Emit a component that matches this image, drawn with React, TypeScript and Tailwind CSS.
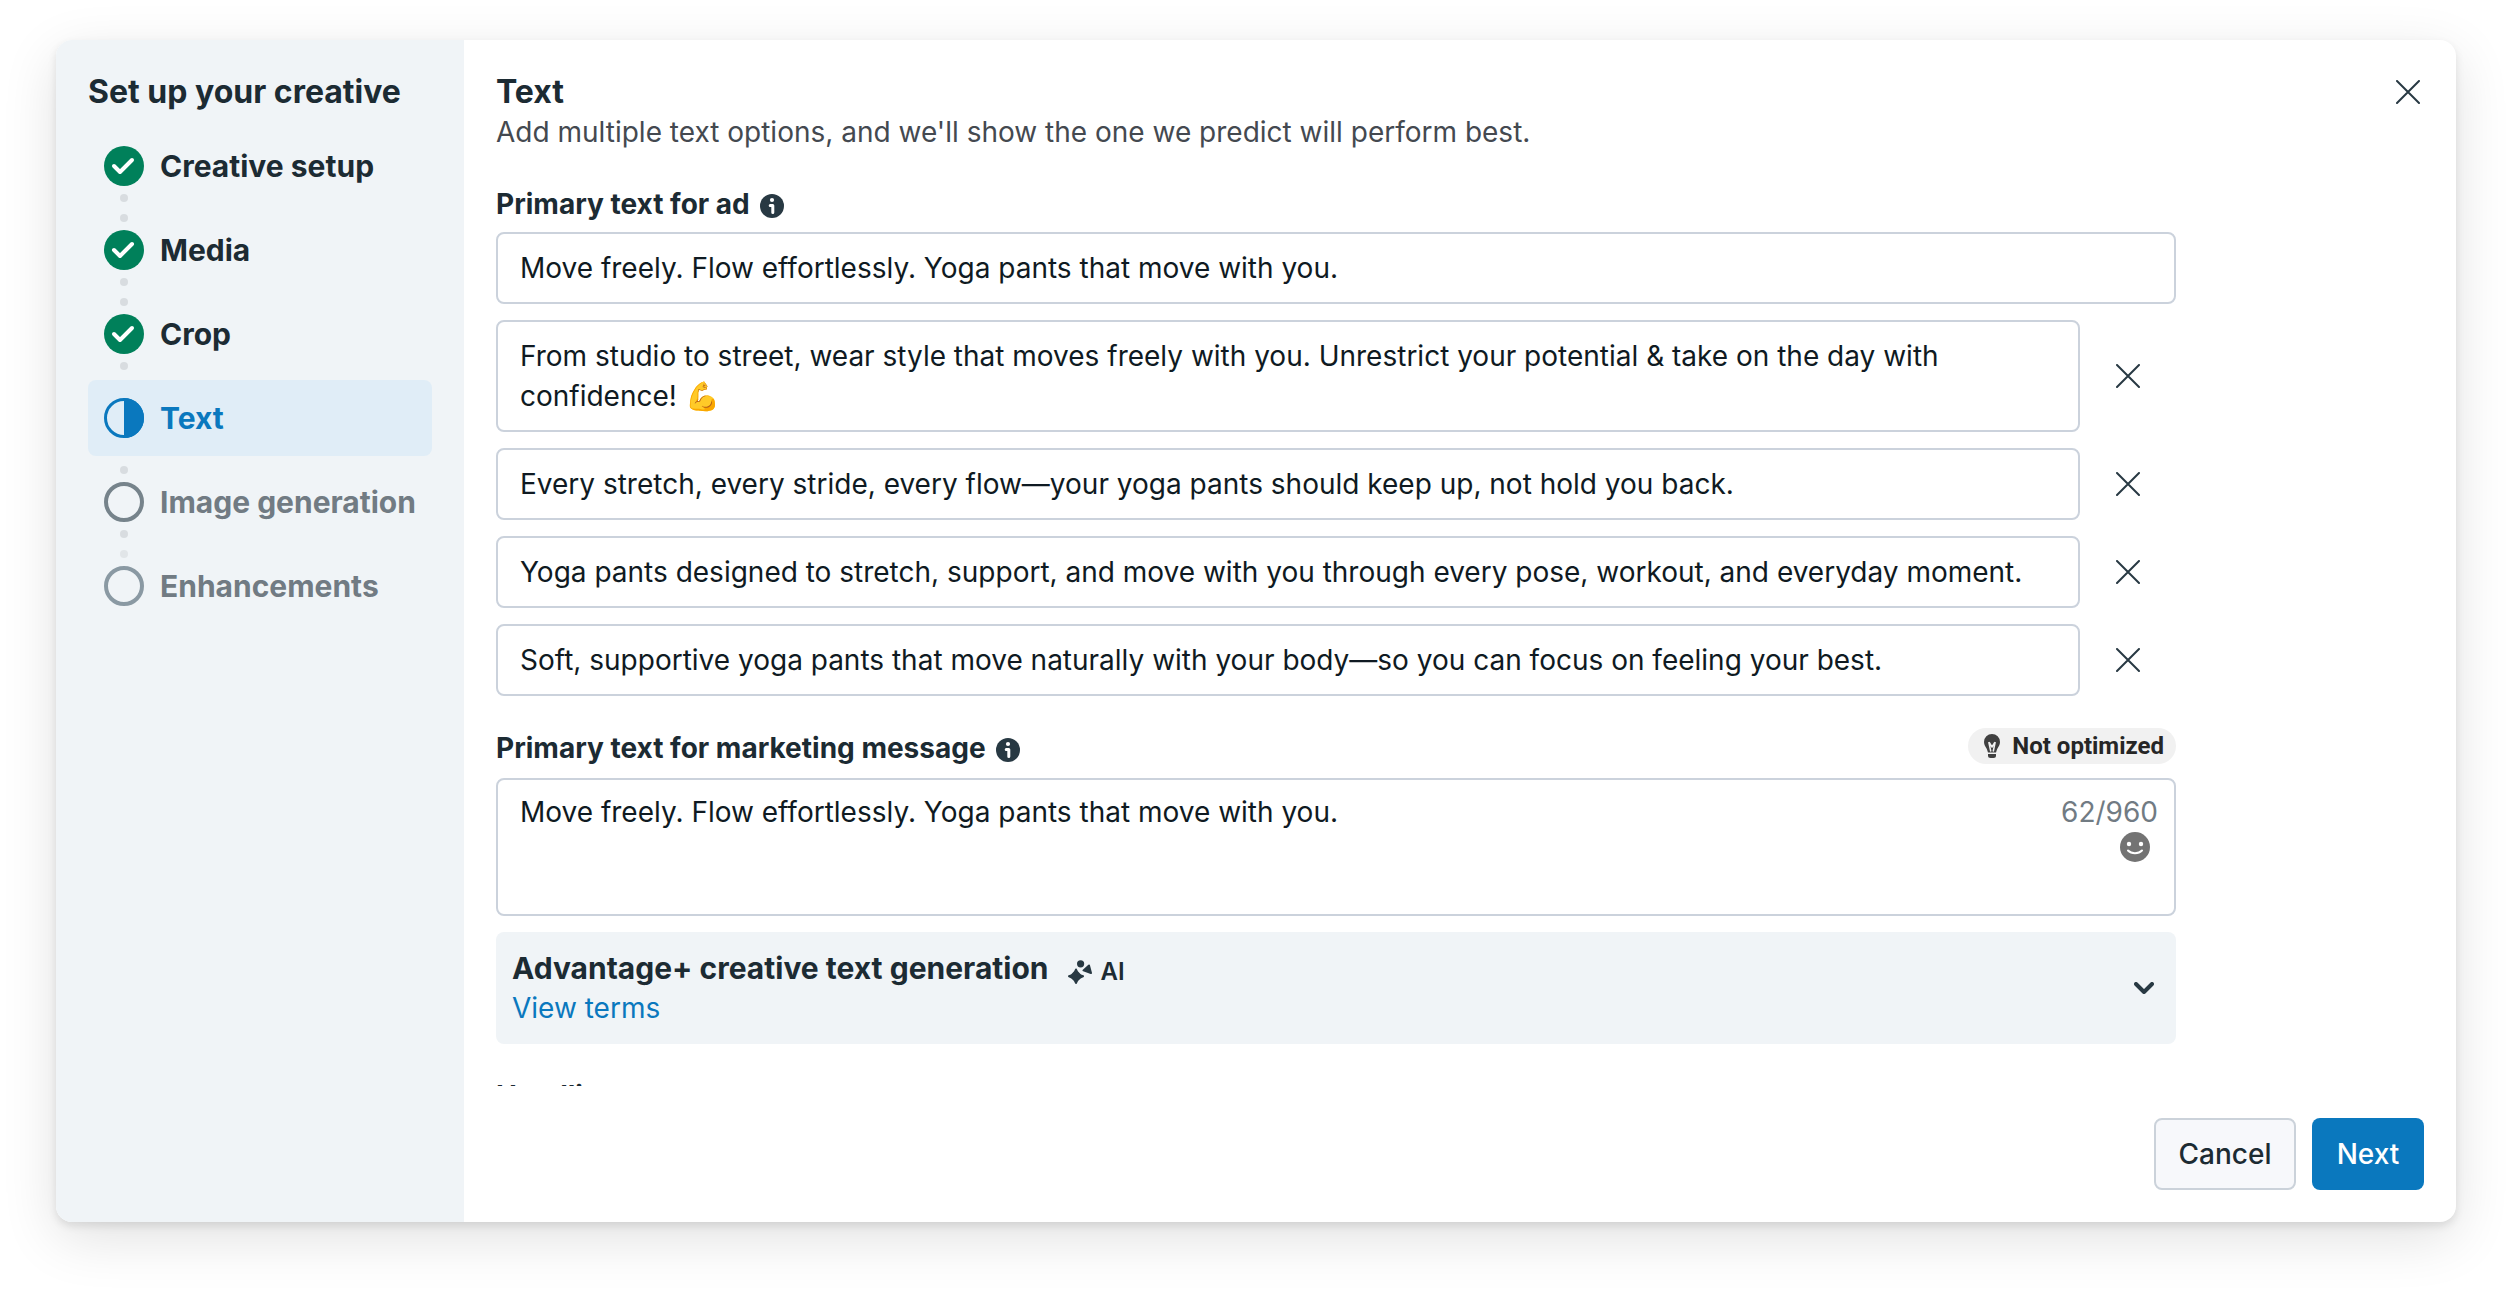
import { useId, useState } from "react";
import { clsx } from "clsx";

type StepState = "done" | "active" | "todo";

interface Step {
    label: string;
    state: StepState;
}

const STEPS: Step[] = [
    { label: "Creative setup", state: "done" },
    { label: "Media", state: "done" },
    { label: "Crop", state: "done" },
    { label: "Text", state: "active" },
    { label: "Image generation", state: "todo" },
    { label: "Enhancements", state: "todo" },
];

const PRIMARY_TEXT = "Move freely. Flow effortlessly. Yoga pants that move with you.";

const VARIATIONS = [
    "From studio to street, wear style that moves freely with you. Unrestrict your potential & take on the day with confidence! 💪",
    "Every stretch, every stride, every flow—your yoga pants should keep up, not hold you back.",
    "Yoga pants designed to stretch, support, and move with you through every pose, workout, and everyday moment.",
    "Soft, supportive yoga pants that move naturally with your body—so you can focus on feeling your best.",
];

const MAX_LENGTH = 960;

const FIELD =
    "block field-sizing-content resize-none rounded-lg border-2 border-[#cbd2dc] bg-white px-[22px] py-3.5 text-[28px] leading-10 text-[#0f1a22] outline-none focus:border-[#0a78be]";

const StepIcon = ({ state, last }: { state: StepState; last: boolean }) => {
    if (state === "done") {
        return (
            <svg viewBox="0 0 40 40" className="size-10" aria-hidden="true">
                <circle cx="20" cy="20" r="20" fill="#00805a" />
                <path d="M10 20l6 6L28 14" fill="none" stroke="#fff" strokeWidth="4" strokeLinecap="round" strokeLinejoin="round" />
            </svg>
        );
    }
    if (state === "active") {
        return (
            <svg viewBox="0 0 40 40" className="size-10" aria-hidden="true">
                <circle cx="20" cy="20" r="18.5" fill="none" stroke="#0a78be" strokeWidth="3" />
                <path d="M20 0a20 20 0 0 1 0 40z" fill="#0a78be" />
            </svg>
        );
    }
    return (
        <svg viewBox="0 0 40 40" className="size-10" aria-hidden="true">
            <circle cx="20" cy="20" r="18" fill="none" stroke={last ? "#8a99a3" : "#76838b"} strokeWidth="4" />
        </svg>
    );
};

const CloseIcon = () => (
    <svg viewBox="0 0 24 24" className="size-6" fill="none" stroke="#283943" strokeWidth="2" strokeLinecap="round" aria-hidden="true">
        <path d="M1 1l22 22M23 1L1 23" />
    </svg>
);

const InfoIcon = () => (
    <svg viewBox="0 0 24 24" className="mt-1 size-6" aria-hidden="true">
        <circle cx="12" cy="12" r="12" fill="#283943" />
        <circle cx="12" cy="6" r="2.1" fill="#fff" />
        <path d="M10.2 11.4h2.6v7.2" fill="none" stroke="#fff" strokeWidth="3" strokeLinecap="round" strokeLinejoin="round" />
    </svg>
);

const BulbIcon = () => (
    <svg viewBox="0 0 16 24" className="h-6 w-4" aria-hidden="true">
        <path d="M8 0a8 8 0 0 1 8 8c0 3-1.6 4.600-2.700 6.800-.6 1.200-.7 2.400-1.300 3.700H4c-.6-1.300-.7-2.500-1.300-3.700C1.600 12.600 0 11 0 8a8 8 0 0 1 8-8z" fill="#404040" />
        <path d="M4.800 8l2 9.500M11.200 8l-2 9.500M5.200 8.500L8 13l2.800-4.500" fill="none" stroke="#f1f1f1" strokeWidth="1.5" strokeLinejoin="round" />
        <path d="M4 20h8v1.500A2.500 2.500 0 0 1 9.500 24h-3A2.500 2.500 0 0 1 4 21.500z" fill="#404040" />
    </svg>
);

const SmileIcon = () => (
    <svg viewBox="0 0 30 30" className="size-[30px]" aria-hidden="true">
        <circle cx="15" cy="15" r="15" fill="#737373" />
        <circle cx="9" cy="12" r="2.2" fill="#fff" />
        <circle cx="21" cy="12" r="2.2" fill="#fff" />
        <path d="M8 18.500c3.500 3.600 10.500 3.600 14 0" fill="none" stroke="#fff" strokeWidth="2" strokeLinecap="round" />
    </svg>
);

const SparkIcon = () => (
    <svg viewBox="0 0 24 24" className="size-6" fill="#283943" stroke="#283943" strokeWidth="2" strokeLinejoin="round" aria-hidden="true">
        <path d="M8 9.500q1.800 5 7 6.700-5.200 1.800-7 6.800-1.800-5-7-6.800 5.200-1.700 7-6.700z" />
        <path d="M5.500 13.500h5v5.500h-5z" />
        <circle cx="12.600" cy="3.800" r="2.600" />
        <path d="M21 5.500l2 7.500-7.500-2.600z" />
    </svg>
);

const ChevronIcon = () => (
    <svg viewBox="0 0 20 12" className="h-3 w-5" fill="none" stroke="#283943" strokeWidth="4" strokeLinecap="round" strokeLinejoin="round" aria-hidden="true">
        <path d="M2 2l8 8 8-8" />
    </svg>
);

const StepItem = ({ step, index }: { step: Step; index: number }) => {
    const active = step.state === "active";
    const last = index === STEPS.length - 1;

    return (
        <li>
            <button
                aria-current={active ? "step" : undefined}
                className={clsx(
                    "flex w-full items-center gap-4 rounded-lg px-4 py-0.5 text-left text-[30px] leading-10 font-bold",
                    active && "bg-[#e0edf7] text-[#0a78be]",
                    step.state === "done" && "text-[#1c2b33]",
                    step.state === "todo" && "text-[#717b83]"
                )}
            >
                <span className="flex flex-col items-center gap-2">
                    <span
                        className={clsx(
                            "size-2 rounded-full",
                            last ? "bg-[#e1e5e8]" : "bg-[#d8dce0]",
                            (active || index === 0) && "invisible"
                        )}
                    />
                    <StepIcon state={step.state} last={last} />
                    <span className={clsx("size-2 rounded-full bg-[#d8dce0]", (active || last) && "invisible")} />
                </span>
                {step.label}
            </button>
        </li>
    );
};

const App = () => {
    const id = useId();
    const [primary, setPrimary] = useState(PRIMARY_TEXT);
    const [variations, setVariations] = useState(VARIATIONS);
    const [message, setMessage] = useState(PRIMARY_TEXT);

    const updateVariation = (index: number, value: string) =>
        setVariations((prev) => prev.map((v, i) => (i === index ? value : v)));

    const removeVariation = (index: number) =>
        setVariations((prev) => prev.filter((_, i) => i !== index));

    return (
        <div className="h-screen bg-white px-14 pt-10 pb-[72px] font-[Inter,'Liberation_Sans',sans-serif] text-[28px] leading-10 text-[#1c2b33]">
            <div
                role="dialog"
                aria-labelledby={`${id}-title`}
                className="flex h-full rounded-2xl bg-white shadow-[0_4px_8px_rgba(0,0,0,0.1),0_16px_56px_rgba(0,0,0,0.12)]"
            >
                {/* Steps */}
                <aside className="w-[408px] shrink-0 rounded-l-2xl bg-[#f0f4f7] p-8">
                    <h2 className="text-[32px] leading-10 font-bold">Set up your creative</h2>
                    <ol className="mt-4 flex flex-col gap-2">
                        {STEPS.map((step, i) => (
                            <StepItem key={step.label} step={step} index={i} />
                        ))}
                    </ol>
                </aside>

                <main className="flex min-w-0 flex-1 flex-col">
                    <div className="min-h-0 flex-1 overflow-hidden px-8 pt-8">
                        <header className="flex items-start justify-between">
                            <div>
                                <h1 id={`${id}-title`} className="text-[32px] leading-10 font-bold">Text</h1>
                                <p className="text-[#444950]">
                                    Add multiple text options, and we'll show the one we predict will perform best.
                                </p>
                            </div>
                            <button aria-label="Close" className="mt-1 p-1">
                                <CloseIcon />
                            </button>
                        </header>

                        <div className="mt-8 mr-[248px]">
                            {/* Primary text */}
                            <div className="flex items-center gap-2.5">
                                <label htmlFor={`${id}-primary`} className="font-bold">Primary text for ad</label>
                                <InfoIcon />
                            </div>
                            <textarea
                                id={`${id}-primary`}
                                rows={1}
                                value={primary}
                                onChange={(e) => setPrimary(e.target.value)}
                                className={clsx(FIELD, "mt-2 w-full")}
                            />
                            {variations.map((text, i) => (
                                <div key={i} className="mt-4 flex items-center">
                                    <textarea
                                        aria-label={`Primary text option ${i + 2}`}
                                        rows={1}
                                        value={text}
                                        onChange={(e) => updateVariation(i, e.target.value)}
                                        className={clsx(FIELD, "min-w-0 flex-1")}
                                    />
                                    <button
                                        aria-label="Remove option"
                                        onClick={() => removeVariation(i)}
                                        className="flex w-24 justify-center py-2"
                                    >
                                        <CloseIcon />
                                    </button>
                                </div>
                            ))}

                            {/* Marketing message */}
                            <div className="mt-8 flex items-start justify-between">
                                <div className="flex items-center gap-2.5">
                                    <label htmlFor={`${id}-message`} className="font-bold">Primary text for marketing message</label>
                                    <InfoIcon />
                                </div>
                                <span className="flex h-9 items-center gap-3 rounded-full bg-[#f1f1f1] pr-3 pl-4 font-[Roboto,sans-serif] text-2xl font-bold text-[#262626]">
                                    <BulbIcon />
                                    Not optimized
                                </span>
                            </div>
                            <div className="mt-2.5 flex rounded-lg border-2 border-[#cbd2dc] py-3 pr-4 pl-[22px] focus-within:border-[#0a78be]">
                                <textarea
                                    id={`${id}-message`}
                                    value={message}
                                    maxLength={MAX_LENGTH}
                                    onChange={(e) => setMessage(e.target.value)}
                                    className="h-[110px] min-w-0 flex-1 resize-none text-[#0f1a22] outline-none"
                                />
                                <div className="flex flex-col items-end">
                                    <span className="text-[#717b83]">{message.length}/{MAX_LENGTH}</span>
                                    <button aria-label="Add emoji" className="mr-2">
                                        <SmileIcon />
                                    </button>
                                </div>
                            </div>

                            {/* Advantage+ */}
                            <section className="mt-4 flex items-center justify-between rounded-lg bg-[#f0f4f7] p-4">
                                <div>
                                    <div className="flex h-10 items-center gap-5">
                                        <h3 className="text-[30px] leading-10 font-bold">Advantage+ creative text generation</h3>
                                        <span className="flex items-center gap-2 pt-2 text-2xl leading-10 font-semibold">
                                            <SparkIcon />
                                            AI
                                        </span>
                                    </div>
                                    <a href="#terms" className="block w-fit text-[#0a78be]">View terms</a>
                                </div>
                                <button aria-label="Expand" className="p-1.5">
                                    <ChevronIcon />
                                </button>
                            </section>

                            <h3 className="mt-8 font-bold">Headline</h3>
                        </div>
                    </div>

                    <footer className="flex justify-end gap-4 p-8">
                        <button className="min-w-[142px] rounded-lg border-2 border-[#cbd2da] bg-[#f7f8fb] px-5 py-3.5 font-medium">Cancel</button>
                        <button className="min-w-28 rounded-lg bg-[#0a78be] px-5 py-4 font-medium text-white">Next</button>
                    </footer>
                </main>
            </div>
        </div>
    );
};

export default App;
